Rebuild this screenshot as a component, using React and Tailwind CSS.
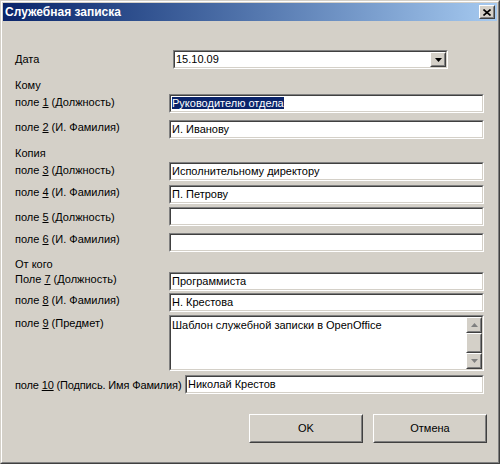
import React from 'react'

const font = { fontFamily: '"Liberation Sans", Arial, sans-serif' }

function Sunken({ className = '', children }) {
  return (
    <div className={`border border-t-[#808080] border-l-[#808080] border-b-white border-r-white ${className}`}>
      <div className="h-full w-full border border-t-[#404040] border-l-[#404040] border-b-[#d4d0c8] border-r-[#d4d0c8] bg-white flex">
        {children}
      </div>
    </div>
  )
}

function Raised({ className = '', children }) {
  return (
    <div className={`border border-t-white border-l-white border-b-[#404040] border-r-[#404040] bg-[#d4d0c8] ${className}`}>
      <div className="h-full w-full border border-t-[#d4d0c8] border-l-[#d4d0c8] border-b-[#808080] border-r-[#808080] flex items-center justify-center">
        {children}
      </div>
    </div>
  )
}

function Field({ value, className = '' }) {
  return (
    <Sunken className={`h-[19px] ${className}`}>
      <div className="pl-[1px] text-[11px] leading-[15px] text-black whitespace-nowrap">{value}</div>
    </Sunken>
  )
}

function Label({ pre, num, post, pt = 'pt-[1px]', w = 'w-[154px]', extra = '' }) {
  return (
    <div className={`${w} shrink-0 text-[11px] leading-[13px] text-black whitespace-nowrap ${pt} ${extra}`}>
      {pre}<span className="underline underline-offset-1">{num}</span>{post}
    </div>
  )
}

function Row({ mt, children }) {
  return <div className={`flex items-start ${mt}`}>{children}</div>
}

function Heading({ mt, children }) {
  return <div className={`h-[13px] text-[11px] leading-[13px] text-black ${mt}`}>{children}</div>
}

export default function App() {
  return (
    <div style={font} className="w-[500px] h-[464px] bg-[#d4d0c8] border border-t-[#d4d0c8] border-l-[#d4d0c8] border-b-[#404040] border-r-[#404040]">
      <div className="h-full w-full border border-t-white border-l-white border-b-[#808080] border-r-[#808080] p-[1px] flex flex-col">
        <div className="h-[18px] shrink-0 bg-gradient-to-r from-[#0a246a] to-[#a6caf0] flex items-center justify-between pl-[2px] pr-[2px]">
          <span className="text-white font-bold text-[12px] leading-[14px]">Служебная записка</span>
          <Raised className="w-[16px] h-[14px]">
            <svg width="8" height="7" viewBox="0 0 8 7">
              <path d="M0.5 0.5 L7.5 6.5 M7.5 0.5 L0.5 6.5" stroke="black" strokeWidth="1.6" />
            </svg>
          </Raised>
        </div>

        <div className="pl-[12px] flex flex-col">
          <Row mt="mt-[29px]">
            <div className="w-[158px] shrink-0 text-[11px] leading-[13px] pt-[3px]">Дата</div>
            <Sunken className="w-[275px] h-[19px]">
              <div className="flex-1 pl-[1px] text-[11px] leading-[15px]">15.10.09</div>
              <Raised className="w-[16px] h-[15px]">
                <svg width="7" height="4" viewBox="0 0 7 4">
                  <path d="M0 0 H7 L3.5 4 Z" fill="black" />
                </svg>
              </Raised>
            </Sunken>
          </Row>

          <Heading mt="mt-[10px]">Кому</Heading>
          <Row mt="mt-[2px]">
            <Label pre="поле " num="1" post=" (Должность)" pt="pt-[2px]" />
            <Sunken className="w-[315px] h-[19px]">
              <div className="pl-[1px] text-[11px] leading-[15px] whitespace-nowrap">
                <span className="bg-[#0a246a] text-white">Руководителю отдела</span>
              </div>
            </Sunken>
          </Row>
          <Row mt="mt-[7px]">
            <Label pre="поле " num="2" post=" (И. Фамилия)" pt="pt-[1px]" />
            <Field className="w-[315px]" value="И. Иванову" />
          </Row>

          <Heading mt="mt-[8px]">Копия</Heading>
          <Row mt="mt-[2px]">
            <Label pre="поле " num="3" post=" (Должность)" pt="pt-[2px]" />
            <Field className="w-[315px]" value="Исполнительному директору" />
          </Row>
          <Row mt="mt-[4px]">
            <Label pre="поле " num="4" post=" (И. Фамилия)" pt="pt-[1px]" />
            <Field className="w-[315px]" value="П. Петрову" />
          </Row>
          <Row mt="mt-[3px]">
            <Label pre="поле " num="5" post=" (Должность)" pt="pt-[4px]" />
            <Field className="w-[315px]" value="" />
          </Row>
          <Row mt="mt-[7px]">
            <Label pre="поле " num="6" post=" (И. Фамилия)" pt="pt-0" />
            <Field className="w-[315px]" value="" />
          </Row>

          <Heading mt="mt-[6px]">От кого</Heading>
          <Row mt="mt-[1px]">
            <Label pre="Поле " num="7" post=" (Должность)" pt="pt-[1px]" />
            <Field className="w-[315px]" value="Программиста" />
          </Row>
          <Row mt="mt-[2px]">
            <Label pre="поле " num="8" post=" (И. Фамилия)" pt="pt-[1px]" />
            <Field className="w-[315px]" value="Н. Крестова" />
          </Row>
          <Row mt="mt-[3px]">
            <Label pre="поле " num="9" post=" (Предмет)" pt="pt-[2px]" />
            <Sunken className="w-[315px] h-[56px]">
              <div className="flex-1 pl-[1px] pt-[1px] text-[11px] leading-[15px] whitespace-nowrap">
                Шаблон служебной записки в OpenOffice
              </div>
              <div className="w-[16px] flex flex-col">
                <Raised className="h-[16px]">
                  <svg width="7" height="5" viewBox="0 0 7 5">
                    <path d="M0 4 H7 L3.5 0 Z" fill="#808080" />
                  </svg>
                </Raised>
                <Raised className="flex-1" />
                <Raised className="h-[16px]">
                  <svg width="7" height="5" viewBox="0 0 7 5">
                    <path d="M0 0 H7 L3.5 4 Z" fill="#808080" />
                  </svg>
                </Raised>
              </div>
            </Sunken>
          </Row>
          <Row mt="mt-[4px]">
            <Label pre="поле " num="10" post=" (Подпись. Имя Фамилия)" pt="pt-[4px]" w="w-[170px]" extra="tracking-[-0.15px]" />
            <Field className="w-[299px]" value="Николай Крестов" />
          </Row>

          <div className="flex mt-[20px] pl-[234px] gap-[10px]">
            <Raised className="w-[114px] h-[29px]">
              <span className="text-[11px] text-black">OK</span>
            </Raised>
            <Raised className="w-[114px] h-[29px]">
              <span className="text-[11px] text-black">Отмена</span>
            </Raised>
          </div>
        </div>
      </div>
    </div>
  )
}
